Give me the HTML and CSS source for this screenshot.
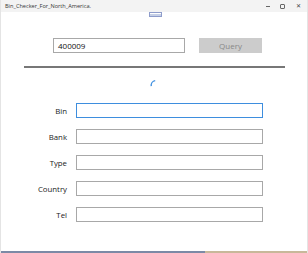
FILE: index.html
```html
<!DOCTYPE html>
<html>
<head>
	<meta charset="UTF-8">
	<title>Bin_Checker_For_North_America.</title>
	<link rel="stylesheet" href="styles.css">
</head>
<body>
	<div class="window">
		<div class="titlebar">
			<span class="title">Bin_Checker_For_North_America.</span>
			<div class="controls">
				<span class="ctl min"></span>
				<span class="ctl max"></span>
				<span class="ctl close">&#x2715;</span>
			</div>
		</div>
		<div class="grip"><span></span></div>
		<div class="search">
			<div class="field query-box">400009</div>
			<div class="btn">Query</div>
		</div>
		<div class="rule"></div>
		<div class="spin">
			<svg width="8" height="8" viewBox="0 0 8 8"><path d="M1.2 7.2 A5 5 0 0 1 5.2 1.6" fill="none" stroke="#3d8fe0" stroke-width="1.4"/></svg>
		</div>
		<div class="form">
			<div class="row"><label>Bin</label><div class="field focus"></div></div>
			<div class="row"><label>Bank</label><div class="field"></div></div>
			<div class="row"><label>Type</label><div class="field"></div></div>
			<div class="row"><label>Country</label><div class="field"></div></div>
			<div class="row"><label>Tel</label><div class="field"></div></div>
		</div>
		<div class="taskbar"><span class="a"></span><span class="b"></span></div>
	</div>
</body>
</html>
```
FILE: styles.css
```css
html, body {
	margin: 0;
	padding: 0;
	background: #fff;
	font-family: "Open Sans", "Noto Sans", sans-serif;
	color: #222;
}
.window {
	width: 308px;
	height: 253px;
	display: flex;
	flex-direction: column;
	box-sizing: border-box;
	border-left: 1px solid #e4e4e4;
	border-right: 1px solid #e4e4e4;
	overflow: hidden;
}
.titlebar {
	height: 12px;
	background: #f3f3f3;
	display: flex;
	align-items: center;
	justify-content: space-between;
	padding-left: 4px;
}
.title {
	font-size: 5.6px;
	color: #333;
}
.controls {
	display: flex;
	align-items: center;
	height: 12px;
}
.ctl {
	width: 15px;
	display: flex;
	justify-content: center;
	align-items: center;
	font-size: 6px;
	color: #444;
}
.min::before {
	content: "";
	width: 4px;
	height: 1px;
	background: #666;
}
.max::before {
	content: "";
	width: 3px;
	height: 3px;
	border: 1px solid #666;
	border-radius: 1px;
}
.close { width: 17px; }
.grip {
	height: 5px;
	display: flex;
	justify-content: center;
}
.grip span {
	width: 11px;
	height: 3px;
	margin-left: 2px;
	background: #c6d0e6;
	border: 1px solid #8e9ccb;
	box-shadow: inset 0 1px 0 #fff;
}
.search {
	display: flex;
	padding: 21px 0 0 52px;
	gap: 14px;
}
.field {
	box-sizing: border-box;
	height: 15px;
	border: 1px solid #a8a8a8;
	background: #fff;
	font-size: 8px;
	line-height: 13px;
	padding-left: 4px;
}
.query-box {
	width: 132px;
	color: #111;
}
.btn {
	width: 63px;
	height: 15px;
	background: #cccccc;
	color: #888;
	font-size: 8px;
	line-height: 15px;
	text-align: center;
}
.rule {
	margin: 13px 0 0 23px;
	width: 261px;
	height: 2px;
	background: #777;
}
.spin {
	display: flex;
	justify-content: center;
	padding: 11px 0 0 0;
	height: 8px;
}
.form {
	display: flex;
	flex-direction: column;
	gap: 11px;
	padding-top: 16px;
}
.row {
	display: flex;
	align-items: center;
	gap: 9px;
}
.row label {
	width: 66px;
	text-align: right;
	font-size: 7.8px;
	color: #222;
}
.row .field {
	width: 187px;
}
.field.focus {
	border-color: #3e8ede;
}
.taskbar {
	margin-top: auto;
	display: flex;
	height: 2px;
}
.taskbar .a { width: 204px; background: #7c8aa6; }
.taskbar .b { flex: 1; background: #c8b89a; }
```
